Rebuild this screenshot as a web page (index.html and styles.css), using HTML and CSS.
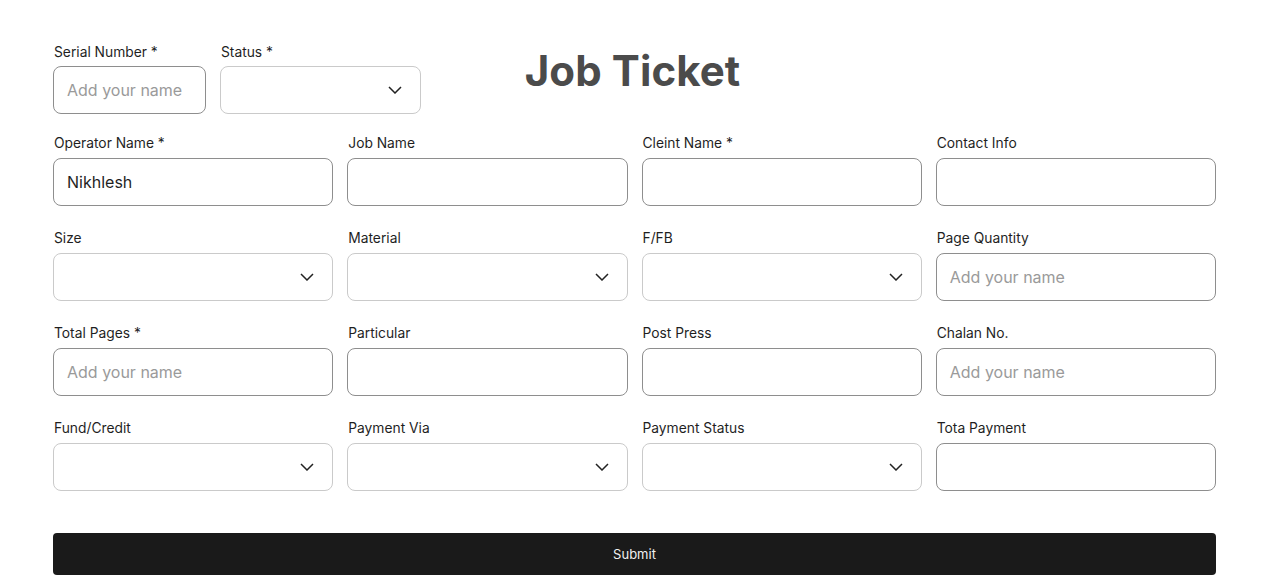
FILE: index.html
```html
<!DOCTYPE html>
<html lang="en">
<head>
<meta charset="utf-8">
<title>Job Ticket</title>
<link rel="stylesheet" href="styles.css">
</head>
<body>
<form class="form">
  <div class="header">
    <div class="head-fields">
      <div class="field serial">
        <label class="label">Serial Number *</label>
        <div class="box text"><span class="ph">Add your name</span></div>
      </div>
      <div class="field status">
        <label class="label">Status *</label>
        <div class="box select"><svg class="chev" width="14" height="8" viewBox="0 0 14 8"><path d="M1 1l6 6 6-6" fill="none" stroke="#222" stroke-width="1.5"/></svg></div>
      </div>
    </div>
    <h1 class="title">Job Ticket</h1>
    <div></div>
  </div>

  <div class="grid">
    <div class="field"><label class="label">Operator Name *</label><div class="box text"><span class="val">Nikhlesh</span></div></div>
    <div class="field"><label class="label">Job Name</label><div class="box text"></div></div>
    <div class="field"><label class="label">Cleint Name *</label><div class="box text"></div></div>
    <div class="field"><label class="label">Contact Info</label><div class="box text"></div></div>

    <div class="field"><label class="label">Size</label><div class="box select"><svg class="chev" width="14" height="8" viewBox="0 0 14 8"><path d="M1 1l6 6 6-6" fill="none" stroke="#222" stroke-width="1.5"/></svg></div></div>
    <div class="field"><label class="label">Material</label><div class="box select"><svg class="chev" width="14" height="8" viewBox="0 0 14 8"><path d="M1 1l6 6 6-6" fill="none" stroke="#222" stroke-width="1.5"/></svg></div></div>
    <div class="field"><label class="label">F/FB</label><div class="box select"><svg class="chev" width="14" height="8" viewBox="0 0 14 8"><path d="M1 1l6 6 6-6" fill="none" stroke="#222" stroke-width="1.5"/></svg></div></div>
    <div class="field"><label class="label">Page Quantity</label><div class="box text"><span class="ph">Add your name</span></div></div>

    <div class="field"><label class="label">Total Pages *</label><div class="box text"><span class="ph">Add your name</span></div></div>
    <div class="field"><label class="label">Particular</label><div class="box text"></div></div>
    <div class="field"><label class="label">Post Press</label><div class="box text"></div></div>
    <div class="field"><label class="label">Chalan No.</label><div class="box text"><span class="ph">Add your name</span></div></div>

    <div class="field"><label class="label">Fund/Credit</label><div class="box select"><svg class="chev" width="14" height="8" viewBox="0 0 14 8"><path d="M1 1l6 6 6-6" fill="none" stroke="#222" stroke-width="1.5"/></svg></div></div>
    <div class="field"><label class="label">Payment Via</label><div class="box select"><svg class="chev" width="14" height="8" viewBox="0 0 14 8"><path d="M1 1l6 6 6-6" fill="none" stroke="#222" stroke-width="1.5"/></svg></div></div>
    <div class="field"><label class="label">Payment Status</label><div class="box select"><svg class="chev" width="14" height="8" viewBox="0 0 14 8"><path d="M1 1l6 6 6-6" fill="none" stroke="#222" stroke-width="1.5"/></svg></div></div>
    <div class="field"><label class="label">Tota Payment</label><div class="box text"></div></div>
  </div>

  <button type="button" class="submit">Submit</button>
</form>
</body>
</html>
```

FILE: styles.css
```css
* { box-sizing: border-box; }
html, body { margin: 0; padding: 0; background: #fff; }
body {
  font-family: Inter, "Open Sans", "Liberation Sans", sans-serif;
  color: #222;
}
.form {
  width: 1163px;
  margin: 0 0 0 53px;
  padding-top: 44px;
}
.header {
  display: grid;
  grid-template-columns: 1fr auto 1fr;
  align-items: start;
}
.head-fields {
  display: flex;
  gap: 14px;
}
.serial { width: 153px; }
.status { width: 201px; }
.title {
  margin: 2px 0 0;
  font-size: 42px;
  font-weight: 700;
  color: #4b4b4b;
  letter-spacing: 0.1px;
  line-height: 50px;
  transform: translateX(-2px);
}
.grid {
  display: grid;
  grid-template-columns: repeat(4, 1fr);
  column-gap: 14px;
  row-gap: 24px;
  margin-top: 21px;
}
.field {
  display: flex;
  flex-direction: column;
}
.label {
  display: block;
  font-size: 13.8px;
  line-height: 17px;
  height: 17px;
  color: #1f1f1f;
  margin: 0 0 6px 1px;
}
.header .label { margin-bottom: 5px; }
.box {
  height: 48px;
  border-radius: 8px;
  display: flex;
  align-items: center;
  padding: 0 13px;
  font-size: 16px;
}
.text { border: 1px solid #8e8e8e; }
.select {
  border: 1px solid #cacaca;
  justify-content: flex-end;
  padding-right: 18px;
}
.chev { display: block; }
.ph { color: #9a9a9a; }
.val { color: #1f1f1f; }
.submit {
  display: block;
  width: 100%;
  height: 42px;
  margin-top: 42px;
  border: 0;
  border-radius: 4px;
  background: #1a1a1a;
  color: #f0f0f0;
  font-family: Inter, "Open Sans", "Liberation Sans", sans-serif;
  font-size: 13px;
}
```
